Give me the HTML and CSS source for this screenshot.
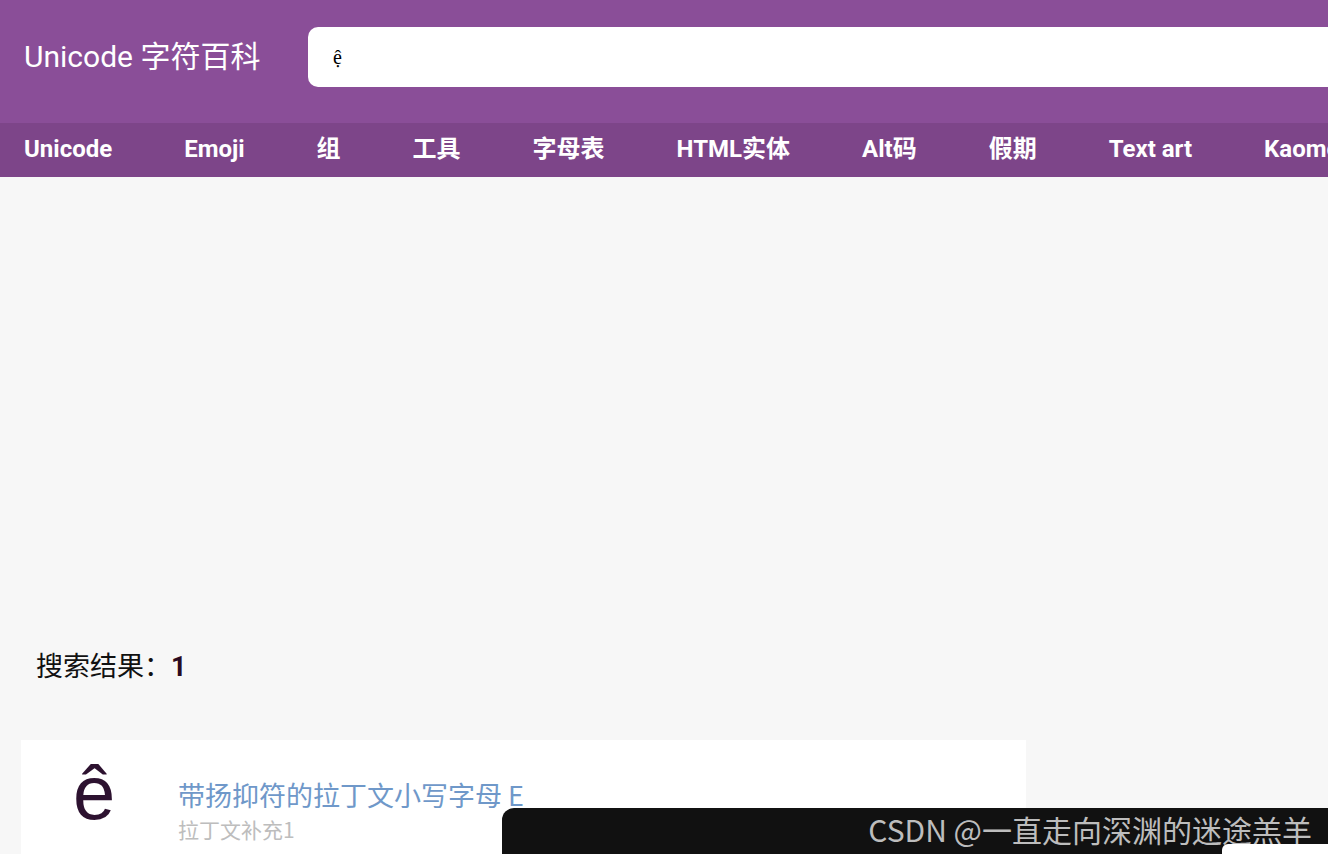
FILE: index.html
```html
<!DOCTYPE html>
<html lang="zh">
<head>
<meta charset="utf-8">
<title>Unicode 字符百科</title>
<link rel="stylesheet" href="styles.css">
</head>
<body>
<header class="top">
  <div class="brand">Unicode 字符百科</div>
  <div class="search"><span class="query">ệ</span></div>
</header>
<nav class="nav">
  <a class="nav-item">Unicode</a>
  <a class="nav-item">Emoji</a>
  <a class="nav-item">组</a>
  <a class="nav-item">工具</a>
  <a class="nav-item">字母表</a>
  <a class="nav-item">HTML实体</a>
  <a class="nav-item">Alt码</a>
  <a class="nav-item">假期</a>
  <a class="nav-item">Text art</a>
  <a class="nav-item">Kaomoji</a>
</nav>
<main class="main">
  <div class="ad-space"></div>
  <div class="count">搜索结果：<b class="count-num">1</b></div>
  <div class="card">
    <div class="glyph">ê</div>
    <div class="info">
      <div class="name">带扬抑符的拉丁文小写字母 E</div>
      <div class="block">拉丁文补充1</div>
    </div>
  </div>
</main>
<div class="watermark">CSDN @一直走向深渊的迷途羔羊</div>
<div class="corner"></div>
</body>
</html>
```
FILE: styles.css
```css
html, body {
  margin: 0;
  padding: 0;
}
body {
  background: #f7f7f7;
  font-family: Roboto, "Noto Sans CJK SC", sans-serif;
  width: 1328px;
  height: 854px;
  overflow: hidden;
  position: relative;
}
.top {
  background: #8a4e98;
  height: 123px;
  display: flex;
  align-items: center;
  padding-left: 24px;
  box-sizing: border-box;
}
.brand {
  color: #fff;
  font-size: 30px;
  font-family: Roboto, "Noto Sans CJK SC", sans-serif;
  margin-top: -16px;
  width: 284px;
  flex: none;
  white-space: nowrap;
}
.search {
  background: #fff;
  height: 60px;
  width: 1200px;
  flex: none;
  border-radius: 10px;
  margin-top: -9px;
  display: flex;
  align-items: center;
  padding-left: 25px;
  box-sizing: border-box;
}
.query {
  font-family: "Liberation Serif", "DejaVu Serif", serif;
  font-size: 20px;
  color: #000;
}
.nav {
  background: #7d4589;
  height: 54px;
  display: flex;
  align-items: center;
  gap: 72px;
  padding-left: 24px;
  white-space: nowrap;
}
.nav-item {
  color: #fff;
  font-weight: 700;
  font-size: 24px;
  flex: none;
  line-height: 30px;
  margin-top: -2px;
}
.main {
  padding: 0 0 0 21px;
}
.ad-space {
  height: 460px;
}
.count {
  font-family: "Noto Sans CJK SC", sans-serif;
  font-size: 27px;
  color: #111;
  padding-left: 15px;
  height: 56px;
  line-height: 56px;
}
.count-num {
  font-family: Roboto, sans-serif;
  font-weight: 700;
  color: #2a0a20;
}
.card {
  margin-top: 47px;
  background: #fff;
  width: 1005px;
  height: 140px;
  display: flex;
  align-items: flex-start;
}
.glyph {
  font-family: "Liberation Sans", Arial, sans-serif;
  font-size: 76px;
  color: #2d1230;
  width: 157px;
  padding-left: 52px;
  box-sizing: border-box;
  line-height: 1;
  margin-top: 15px;
}
.info {
  padding-top: 36px;
}
.name {
  font-family: "Noto Sans CJK SC", sans-serif;
  font-size: 27px;
  color: #6f98c9;
  line-height: 38px;
}
.block {
  font-family: "Noto Sans CJK SC", sans-serif;
  font-size: 21px;
  color: #bdbdbd;
  line-height: 26px;
  margin-top: 2px;
}
.watermark {
  position: absolute;
  left: 502px;
  top: 808px;
  width: 826px;
  height: 46px;
  background: #111;
  border-top-left-radius: 12px;
  color: #bdbdbd;
  font-family: "Noto Sans CJK SC", sans-serif;
  font-size: 30px;
  line-height: 42px;
  text-align: right;
  padding-right: 16px;
  box-sizing: border-box;
}
.corner {
  position: absolute;
  left: 1222px;
  top: 844px;
  width: 106px;
  height: 10px;
  background: #fff;
  border-top-left-radius: 6px;
}
```
